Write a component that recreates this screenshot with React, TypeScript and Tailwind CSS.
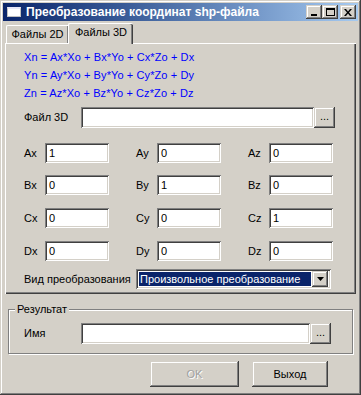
import React from 'react';

const raised =
  'shadow-[inset_-1px_-1px_0_#404040,inset_1px_1px_0_#d4d0c8,inset_-2px_-2px_0_#808080,inset_2px_2px_0_#ffffff]';
const sunken =
  'shadow-[inset_1px_1px_0_#808080,inset_-1px_-1px_0_#ffffff,inset_2px_2px_0_#404040,inset_-2px_-2px_0_#d4d0c8]';

function TitleButton({ children }: { children: React.ReactNode }) {
  return (
    <div className={`w-[16px] h-[14px] bg-[#d4d0c8] flex items-center justify-center ${raised}`}>
      {children}
    </div>
  );
}

function Field({ value, className = '' }: { value?: string; className?: string }) {
  return (
    <div className={`h-[20px] bg-white flex items-center pl-[4px] text-black ${sunken} ${className}`}>
      {value}
    </div>
  );
}

function BrowseButton() {
  return (
    <div className={`w-[21px] h-[21px] shrink-0 bg-[#d4d0c8] flex items-center justify-center text-[11px] leading-none pb-[2px] ${raised}`}>
      ...
    </div>
  );
}

const rows = [
  [['Ax', '1'], ['Ay', '0'], ['Az', '0']],
  [['Bx', '0'], ['By', '1'], ['Bz', '0']],
  [['Cx', '0'], ['Cy', '0'], ['Cz', '1']],
  [['Dx', '0'], ['Dy', '0'], ['Dz', '0']],
];

export default function App() {
  return (
    <div
      className={`w-[361px] h-[395px] bg-[#d4d0c8] p-[3px] flex flex-col text-[11px] text-black ${raised}`}
      style={{ fontFamily: '"Liberation Sans", Arial, sans-serif' }}
    >
      {/* Заголовок окна */}
      <div className="h-[18px] bg-linear-to-r from-[#0a246a] to-[#a6caf0] flex items-center pl-[4px] pr-[2px]">
        <div className="w-[14px] h-[10px] bg-white border border-[#c0c0c0] border-t-2 border-t-[#e8e8f8]" />
        <div className="ml-[5px] text-white font-bold text-[12px] leading-none flex-1">
          Преобразование координат shp-файла
        </div>
        <TitleButton>
          <div className="w-[6px] h-[2px] bg-black mt-[6px] -ml-[1px]" />
        </TitleButton>
        <TitleButton>
          <div className="w-[9px] h-[8px] border border-black border-t-2" />
        </TitleButton>
        <div className="w-[2px]" />
        <TitleButton>
          <svg width="8" height="7" viewBox="0 0 8 7">
            <path d="M0 0h2l2 2.5L6 0h2L5 3.5 8 7H6L4 4.5 2 7H0l3-3.5z" fill="#000" />
          </svg>
        </TitleButton>
      </div>

      {/* Вкладки */}
      <div className="h-[22px] flex items-end px-[3px]">
        <div className="w-[62px] h-[18px] flex items-center justify-center pb-[1px] border-l border-t border-white rounded-tl-[2px] shadow-[inset_-1px_0_0_#808080]">
          Файлы 2D
        </div>
        <div className="relative z-10 -mb-[1px] w-[65px] h-[21px] bg-[#d4d0c8] flex items-center justify-center pb-[3px] border-l border-t border-white rounded-t-[2px] shadow-[inset_-1px_0_0_#404040,inset_-2px_0_0_#808080]">
          Файлы 3D
        </div>
      </div>

      {/* Панель вкладки */}
      <div className="mx-[2px] h-[251px] border-l border-t border-white shadow-[inset_-1px_-1px_0_#404040,inset_-2px_-2px_0_#808080] pl-[18px] pr-[21px]">
        <div className="mt-[4px] text-[#0000ff] tracking-[0.1px]">
          <div className="h-[18px] flex items-center">Xn = Ax*Xo + Bx*Yo + Cx*Zo + Dx</div>
          <div className="h-[18px] flex items-center">Yn = Ay*Xo + By*Yo + Cy*Zo + Dy</div>
          <div className="h-[18px] flex items-center">Zn = Az*Xo + Bz*Yo + Cz*Zo + Dz</div>
        </div>

        <div className="mt-[5px] flex items-center">
          <div className="w-[57px] shrink-0">Файл 3D</div>
          <Field className="flex-1 h-[21px]" />
          <BrowseButton />
        </div>

        {rows.map((row, i) => (
          <div key={i} className={`flex ${i === 0 ? 'mt-[15px]' : i === 1 ? 'mt-[12px]' : 'mt-[13px]'}`}>
            {row.map(([label, value]) => (
              <div key={label} className="w-[112px] shrink-0 flex items-center">
                <div className="w-[21px] shrink-0">{label}</div>
                <Field value={value} className="w-[64px] shrink-0" />
              </div>
            ))}
          </div>
        ))}

        <div className="mt-[8px] flex items-center">
          <div className="w-[112px] shrink-0">Вид преобразования</div>
          <div className={`w-[195px] h-[20px] shrink-0 bg-white flex items-center p-[3px] ${sunken}`}>
            <div className="flex-1 h-full bg-[#0a246a] text-white flex items-center pl-[1px] mr-[1px]">
              Произвольное преобразование
            </div>
            <div className={`w-[16px] h-[16px] -my-[1px] bg-[#d4d0c8] flex items-center justify-center ${raised}`}>
              <svg width="7" height="4" viewBox="0 0 7 4">
                <path d="M0 0h7L3.5 4z" fill="#000" />
              </svg>
            </div>
          </div>
        </div>
      </div>

      {/* Результат */}
      <div className="relative mt-[15px] mx-[5px] h-[45px] border border-[#808080] shadow-[1px_1px_0_#ffffff,inset_1px_1px_0_#ffffff] pl-[15px] pr-[21px]">
        <div className="absolute -top-[7px] left-[6px] px-[2px] bg-[#d4d0c8] leading-[13px]">
          Результат
        </div>
        <div className="mt-[13px] flex items-center">
          <div className="w-[57px] shrink-0">Имя</div>
          <Field className="flex-1 h-[21px]" />
          <BrowseButton />
        </div>
      </div>

      {/* Кнопки */}
      <div className="mt-[7px] flex justify-end pr-[30px] gap-[13px]">
        <div className={`w-[89px] h-[26px] bg-[#d4d0c8] flex items-center justify-center text-[#a0a0a0] [text-shadow:1px_1px_0_#ffffff] ${raised}`}>
          OK
        </div>
        <div className={`w-[76px] h-[26px] bg-[#d4d0c8] flex items-center justify-center ${raised}`}>
          Выход
        </div>
      </div>
    </div>
  );
}
